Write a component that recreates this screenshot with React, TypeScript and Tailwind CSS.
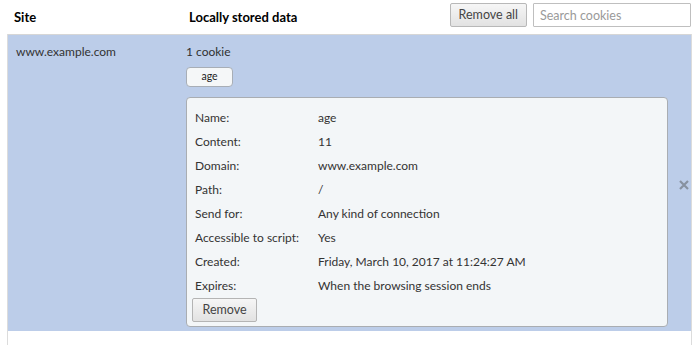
import React from 'react';

const rows: [string, string][] = [
  ['Name:', 'age'],
  ['Content:', '11'],
  ['Domain:', 'www.example.com'],
  ['Path:', '/'],
  ['Send for:', 'Any kind of connection'],
  ['Accessible to script:', 'Yes'],
  ['Created:', 'Friday, March 10, 2017 at 11:24:27 AM'],
  ['Expires:', 'When the browsing session ends'],
];

export default function App(): JSX.Element {
  return (
    <div className="w-[699px] h-[345px] bg-white text-[12px] text-[#303030] overflow-hidden font-['Lato','Open_Sans',sans-serif]">
      <div className="flex items-center h-[34px] pl-[14px] pr-[8px]">
        <div className="w-[175px] font-bold text-[13px] text-black pt-[1px]">Site</div>
        <div className="flex-1 font-bold text-[13px] text-black pt-[1px]">Locally stored data</div>
        <button className="self-start mt-[3px] h-[24px] px-[8px] mr-[6px] text-[12.5px] text-[#444] border border-[#b8b8b8] rounded-[2px] bg-gradient-to-b from-[#f6f6f6] to-[#e2e2e2]">
          Remove all
        </button>
        <input
          className="self-start mt-[3px] w-[158px] h-[24px] px-[6px] text-[12.5px] border border-[#bfbfbf] rounded-[1px] outline-none placeholder:text-[#9a9a9a]"
          placeholder="Search cookies"
        />
      </div>
      <div className="mx-[7px] border-x border-[#dcdcdc] h-full">
        <div className="flex bg-[#bccde9] border-t border-[#d6d6d6] pt-[8px] pb-[4px]">
          <div className="w-[178px] pl-[8px] text-[#333]">www.example.com</div>
          <div className="flex flex-col items-start">
            <div className="h-[18px] leading-[18px]">1 cookie</div>
            <button className="mt-[6px] w-[47px] h-[20px] text-[10.5px] text-[#222] bg-[#f5f7f8] border border-[#a8aeb6] rounded-[4px]">
              age
            </button>
            <div className="mt-[10px] w-[482px] bg-[#f3f6f8] border border-[#a9adb2] rounded-[4px] pl-[8px] pt-[8px] pb-[4px]">
              {rows.map(([k, v]) => (
                <div key={k} className="flex h-[24px] items-center">
                  <div className="w-[123px] text-[#333]">{k}</div>
                  <div className="text-[#333]">{v}</div>
                </div>
              ))}
              <button className="-ml-[3px] h-[24px] w-[65px] text-[12.5px] text-[#444] border border-[#b4b4b4] rounded-[2px] bg-gradient-to-b from-[#f6f6f6] to-[#e2e2e2]">
                Remove
              </button>
            </div>
          </div>
          <div className="flex-1 flex items-center justify-center pl-[8px]">
            <svg width="10" height="10" viewBox="0 0 10 10">
              <path d="M1 1L9 9M9 1L1 9" stroke="#8791a0" strokeWidth="2.2" />
            </svg>
          </div>
        </div>
      </div>
    </div>
  );
}
